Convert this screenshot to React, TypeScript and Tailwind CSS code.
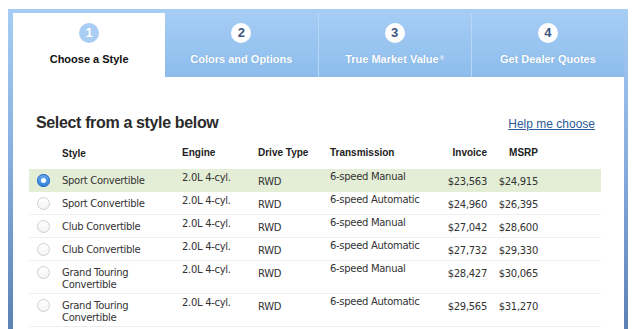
import React from 'react';

type Row = {
    style: string[];
    engine: string;
    drive: string;
    trans: string;
    invoice: string;
    msrp: string;
};

const rows: Row[] = [
    { style: ['Sport Convertible'], engine: '2.0L 4-cyl.', drive: 'RWD', trans: '6-speed Manual', invoice: '$23,563', msrp: '$24,915' },
    { style: ['Sport Convertible'], engine: '2.0L 4-cyl.', drive: 'RWD', trans: '6-speed Automatic', invoice: '$24,960', msrp: '$26,395' },
    { style: ['Club Convertible'], engine: '2.0L 4-cyl.', drive: 'RWD', trans: '6-speed Manual', invoice: '$27,042', msrp: '$28,600' },
    { style: ['Club Convertible'], engine: '2.0L 4-cyl.', drive: 'RWD', trans: '6-speed Automatic', invoice: '$27,732', msrp: '$29,330' },
    { style: ['Grand Touring', 'Convertible'], engine: '2.0L 4-cyl.', drive: 'RWD', trans: '6-speed Manual', invoice: '$28,427', msrp: '$30,065' },
    { style: ['Grand Touring', 'Convertible'], engine: '2.0L 4-cyl.', drive: 'RWD', trans: '6-speed Automatic', invoice: '$29,565', msrp: '$31,270' },
];

const tabs = [
    { n: '1', label: 'Choose a Style' },
    { n: '2', label: 'Colors and Options' },
    { n: '3', label: 'True Market Value' },
    { n: '4', label: 'Get Dealer Quotes' },
];

const cols = 'grid grid-cols-[33px_120px_76px_72px_110px_47px_51px_1fr]';

function Radio({ checked }: { checked: boolean }) {
    if (checked) {
        return (
            <div className="ml-[8px] mt-[5px] flex h-[13px] w-[13px] items-center justify-center rounded-full bg-linear-to-b from-[#6aaef0] to-[#2f7fdc] shadow-[inset_0_0_0_1px_#2a6fc4]">
                <div className="h-[5px] w-[5px] rounded-full bg-white" />
            </div>
        );
    }
    return <div className="ml-[8px] mt-[5px] h-[13px] w-[13px] rounded-full border border-[#cfcfcf] bg-linear-to-b from-white to-[#f3f3f3]" />;
}

export default function App() {
    return (
        <div className="h-[329px] w-[640px] overflow-hidden bg-white pl-[8px] pt-[9px]">
            <div className="h-[320px] w-[620px] bg-linear-to-b from-[#a6cdf4] via-[#86acdd] to-[#5c81b5] pl-[5px] pr-[4px] pt-[4px]">
                <div className="flex h-full flex-col bg-white">
                    {/* step tabs */}
                    <div className="flex h-[64px] bg-linear-to-b from-[#a5cdf5] to-[#8dbcec] font-['Liberation_Sans',Arial,sans-serif]">
                        {tabs.map((t, i) => (
                            <div
                                key={t.n}
                                className={
                                    i === 0
                                        ? 'flex flex-1 flex-col items-center bg-white pt-[10px]'
                                        : i === 1
                                            ? 'flex flex-1 flex-col items-center pt-[10px]'
                                            : 'flex flex-1 flex-col items-center border-l border-[#b6d7f7] pt-[10px]'
                                }
                            >
                                <div
                                    className={
                                        i === 0
                                            ? 'flex h-[20px] w-[20px] items-center justify-center rounded-full bg-[#a9cdf3] text-[13px] font-bold text-white'
                                            : 'flex h-[20px] w-[20px] items-center justify-center rounded-full bg-white text-[13px] font-bold text-[#3b5680]'
                                    }
                                >
                                    {t.n}
                                </div>
                                <div
                                    className={
                                        i === 0
                                            ? 'mt-[10px] text-[11px] leading-[13px] font-bold text-[#111]'
                                            : 'mt-[10px] text-[11px] leading-[13px] font-bold text-white [text-shadow:0_0_1px_rgba(60,110,170,0.4)]'
                                    }
                                >
                                    {t.label}
                                    {i === 2 && <sup className="ml-[1px] text-[6px]">®</sup>}
                                </div>
                            </div>
                        ))}
                    </div>

                    {/* heading */}
                    <div className="mt-[36px] flex items-end justify-between pl-[23px] pr-[29px] font-['Liberation_Sans',Arial,sans-serif]">
                        <h2 className="text-[16px] leading-[19px] font-bold tracking-[-0.35px] text-[#2b2b2b]">Select from a style below</h2>
                        <a className="text-[12px] leading-[15px] text-[#2a5a98] underline">Help me choose</a>
                    </div>

                    {/* table */}
                    <div className="ml-[16px] mr-[23px] mt-[10px]">
                        <div className={`${cols} h-[27px] pt-[5px] font-['Liberation_Sans',Arial,sans-serif] text-[10px] leading-[12px] font-bold text-[#222]`}>
                            <div />
                            <div className="pt-[1px]">Style</div>
                            <div>Engine</div>
                            <div>Drive Type</div>
                            <div>Transmission</div>
                            <div className="text-right">Invoice</div>
                            <div className="text-right">MSRP</div>
                            <div />
                        </div>
                        {rows.map((r, i) => (
                            <div
                                key={i}
                                className={`${cols} min-h-[23px] items-start font-['DejaVu_Sans',Verdana,sans-serif] text-[10px] leading-[12px] tracking-[-0.3px] text-[#333] ${i === 0 ? 'bg-[#e4eed6]' : 'border-b border-[#eeeeee]'}`}
                            >
                                <Radio checked={i === 0} />
                                <div className="pb-[2px] pt-[6px]">
                                    {r.style.map((s) => (
                                        <div key={s}>{s}</div>
                                    ))}
                                </div>
                                <div className="pt-[3px]">{r.engine}</div>
                                <div className="pt-[7px]">{r.drive}</div>
                                <div className="pt-[2px]">{r.trans}</div>
                                <div className="pt-[7px] text-right">{r.invoice}</div>
                                <div className="pt-[7px] text-right">{r.msrp}</div>
                                <div />
                            </div>
                        ))}
                    </div>
                </div>
            </div>
        </div>
    );
}
